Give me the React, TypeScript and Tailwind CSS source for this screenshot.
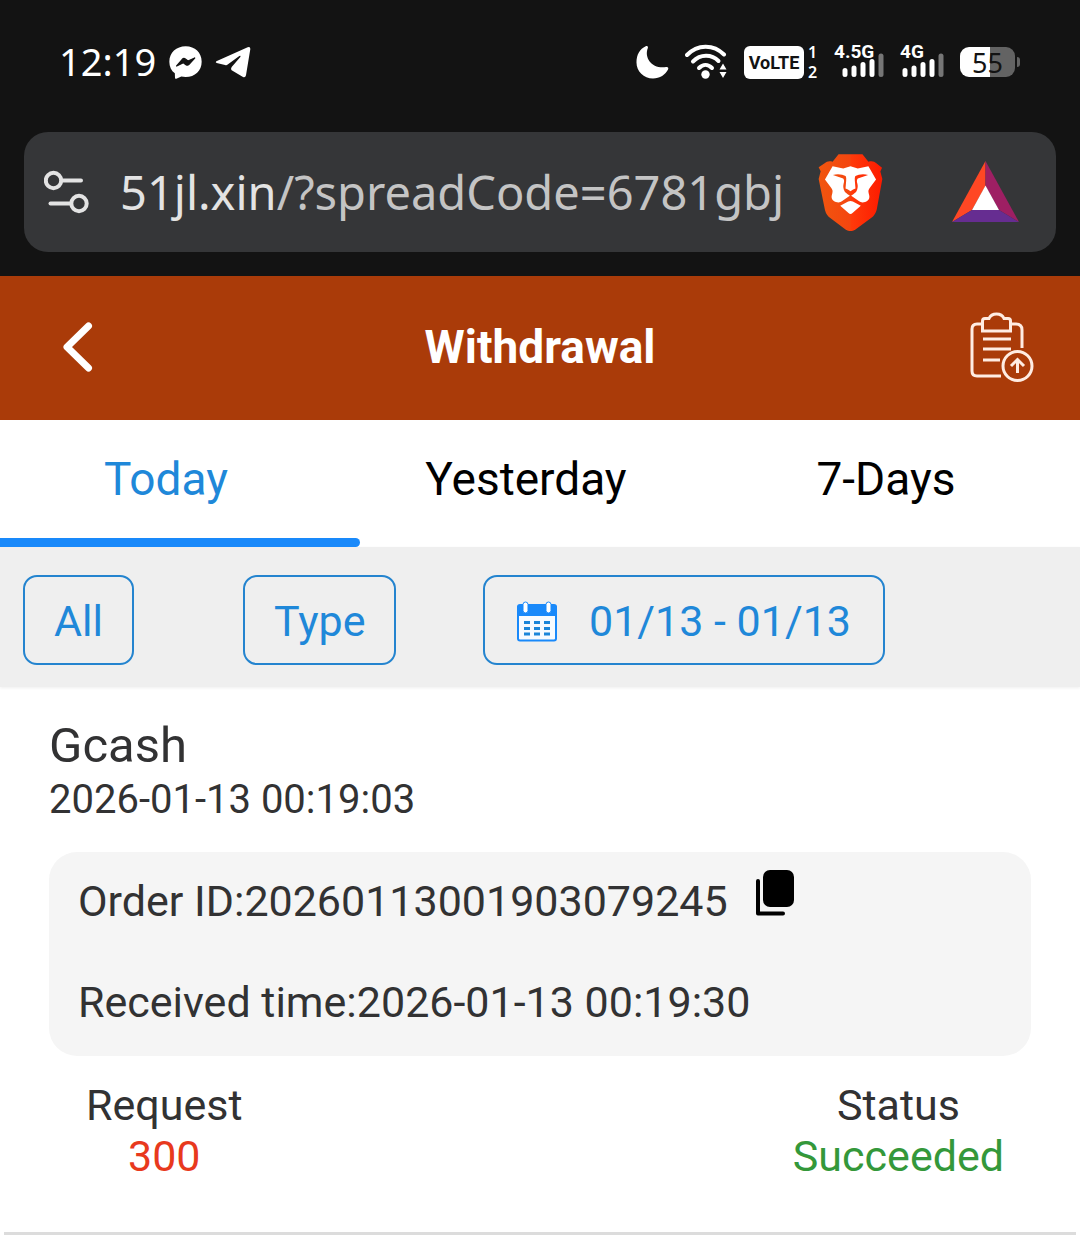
import { useState } from 'react';

interface Withdrawal {
  method: string;
  createdAt: string;
  orderId: string;
  receivedAt: string;
  amount: number;
  status: string;
}

const TABS = ['Today', 'Yesterday', '7-Days'];

const WITHDRAWALS: Withdrawal[] = [
  {
    method: 'Gcash',
    createdAt: '2026-01-13 00:19:03',
    orderId: '20260113001903079245',
    receivedAt: '2026-01-13 00:19:30',
    amount: 300,
    status: 'Succeeded',
  },
];

function MessengerIcon() {
  return (
    <svg width="33" height="33" viewBox="386 44 99 99" aria-hidden="true">
      <path
        fill="#fff"
        d="M436 45c28 0 48 19 48 46s-20 46-48 46c-5 0-9-.5-13-1.500l-15 6.500c-2 1-4-.5-4-3l-.5-13C393 118 387 106 387 91c0-27 21-46 49-46z"
      />
      <path
        d="M409 104l17-20c3-3 6-3 9-1l8 6 20-9-17 19c-3 3-6 3-9 1l-8-6z"
        fill="#131313"
        stroke="#131313"
        strokeWidth="4"
        strokeLinejoin="round"
      />
    </svg>
  );
}

function TelegramIcon() {
  return (
    <svg width="36" height="32" viewBox="18 12 108 96" aria-hidden="true">
      <path fill="#fff" d="M22 58l94-42q8-3 8 5l-13 79q-2 8-9 5L68 85 48 69l-25-6q-5-2-1-5z" />
      <path fill="#131313" d="M46 70q5 1 9-2l36-26q5-2 3 3L68 75q-3 4-1 9l-2 4z" />
    </svg>
  );
}

function MoonIcon() {
  return (
    <svg width="33" height="34" viewBox="0 0 34 34" aria-hidden="true">
      <path
        fill="#fff"
        d="M10 .8C11.500.2 12.800 1 12.200 2.500 8 13 17 24.500 31 22.200c2-.3 2.800.8 2 2.500C30.500 30 24.500 34 17.500 34 8 34 .5 26.700.5 17.500.5 9.500 4 3.500 10 .8z"
      />
    </svg>
  );
}

function WifiIcon() {
  return (
    <svg width="43" height="36" viewBox="0 0 43 36" fill="none" aria-hidden="true">
      <g stroke="#fff" strokeWidth="4" strokeLinecap="round">
        <path d="M2 11C12.500 0 28.500 0 39 10.500" />
        <path d="M8 17.500c7.500-7.500 18.500-7.500 25.500-.5" />
        <path d="M14 24c4-4 9-4 13 0" />
      </g>
      <circle cx="20.500" cy="30.500" r="4.200" fill="#fff" />
      <path d="M34.500 25.500l3.500-6 3.500 6zM34.500 28h7L38 34z" fill="#fff" />
    </svg>
  );
}

function SignalIcon({ label, offset }: { label: string; offset: number }) {
  return (
    <svg
      width={offset + 42}
      height="56"
      viewBox={`0 -10 ${offset + 42} 56`}
      className="overflow-visible"
      role="img"
      aria-label={`${label} signal`}
    >
      <text x="0" y="14" fill="#fff" className="font-['Roboto',sans-serif] text-[19px] font-bold">
        {label}
      </text>
      <g strokeWidth="5" strokeLinecap="round" stroke="#fff">
        <path d={`M${offset + 3} 26.500v4M${offset + 12} 24v6.500M${offset + 21} 20.500v10M${offset + 30} 17.500v13`} />
        <path stroke="#767676" d={`M${offset + 39} 12v18.500`} />
      </g>
    </svg>
  );
}

function SiteSettingsIcon() {
  return (
    <svg width="46" height="44" viewBox="0 0 46 44" fill="none" stroke="#e3e3e3" strokeWidth="4" strokeLinecap="round" aria-hidden="true">
      <circle cx="9.500" cy="10.500" r="7.700" />
      <path d="M18 10.500h19" />
      <circle cx="35" cy="33.500" r="7.700" />
      <path d="M6.500 33.500H26" />
    </svg>
  );
}

function BraveIcon() {
  return (
    <svg width="65" height="77" viewBox="54 70 196 232" aria-hidden="true">
      <defs>
        <linearGradient id="brave" gradientUnits="userSpaceOnUse" x1="54" y1="0" x2="250" y2="0">
          <stop offset="0" stopColor="#f1560f" />
          <stop offset="0.490" stopColor="#f4460f" />
          <stop offset="0.510" stopColor="#ff3a0a" />
          <stop offset="1" stopColor="#fd1a00" />
        </linearGradient>
      </defs>
      <path
        fill="url(#brave)"
        d="M116 71h72l18 22c10-3 18-1 24 5l17 13-5 12 6 22-17 93q-4 16-17 25l-48 35q-14 9-28 0l-46-34q-13-9-17-25L56 145l6-23-6-12 18-12c6-6 14-8 24-5z"
      />
      <path
        fill="#fff"
        d="M152 107l22 7 32-7 23 40-18 24c-5 6-6 11-4 18 5 14 0 22-11 26-8 2-14 1-19-3l-25-18-25 18c-5 4-11 5-19 3-11-4-16-12-11-26 2-7 1-12-4-18l-18-24 23-40 32 7z"
      />
      {/* Brows and nose ridge, with the nose laid over them */}
      <path
        fill="url(#brave)"
        d="M99 133c12-4 28-3 40 4h26c12-7 28-8 40-4l-31 11c-4 5-3 10-1 16 2 8 0 14-2 20-2 6-9 10-15 14l-4 3-4-3c-6-4-13-8-15-14-2-6-4-12-2-20 2-6 3-11-1-16z"
      />
      <path fill="#fff" d="M137 134q15 4 30 0-3 8-2 16l2 24q-7 2-15 8-8-6-15-8l2-24q1-8-2-16z" />
      <path fill="#fff" d="M121 226l24-13q7-3 14 0l24 13-25 22q-6 6-12 0z" />
    </svg>
  );
}

function BatIcon() {
  return (
    <svg width="69" height="62" viewBox="0 0 69 62" aria-hidden="true">
      <path fill="#ff4724" d="M34.500 0v25L21 49 1 61z" />
      <path fill="#9e1f63" d="M34.500 0v25L48 49l20 12z" />
      <path fill="#662d91" d="M1 61l20-12h27l20 12z" />
      <path fill="#fff" d="M34.500 24.500L48 49H21z" />
    </svg>
  );
}

function RecordIcon() {
  return (
    <svg width="64" height="70" viewBox="0 0 64 70" fill="none" stroke="#ffece2" strokeWidth="3" aria-hidden="true">
      <path d="M12 12H7q-5 0-5 5v42q0 5 5 5h24" />
      <path d="M41 12h5q6 0 6 6v18" />
      <path d="M12.500 19V9q0-2.500 2.500-2.500h4Q21 2 26.500 2T34 6.500h4q2.500 0 2.500 2.500v10z" />
      <path d="M13 27h28M13 37h28M13 48h17" />
      <circle cx="47.500" cy="54" r="14.500" />
      <path d="M47.500 61V48M41 54l6.500-6.500L54 54" />
    </svg>
  );
}

function CalendarIcon() {
  return (
    <svg width="40" height="41" viewBox="0 0 40 41" aria-hidden="true">
      <rect x="1" y="5" width="38" height="34.500" rx="2" fill="#f7fbff" stroke="#1989fa" strokeWidth="2" />
      <path d="M0 15V6q0-3 3-3h34q3 0 3 3v9z" fill="#1989fa" />
      <rect x="6" y="1" width="5" height="11" rx="2.500" fill="#fff" stroke="#1989fa" />
      <rect x="29" y="1" width="5" height="11" rx="2.500" fill="#fff" stroke="#1989fa" />
      <path
        d="M7 21.500h6M17 21.500h6M27 21.500h6M7 27.500h6M17 27.500h6M27 27.500h6M7 33h6M17 33h6M27 33h6"
        stroke="#1c86d9"
        strokeWidth="3"
      />
    </svg>
  );
}

function CopyIcon() {
  return (
    <svg width="38" height="46" viewBox="0 0 38 46" aria-hidden="true">
      <rect x="7" y="0" width="31" height="37" rx="7" />
      <path d="M2 11v32.500h25" fill="none" stroke="#000" strokeWidth="4" strokeLinecap="round" strokeLinejoin="round" />
    </svg>
  );
}

function StatusBar() {
  return (
    <div className="flex h-[124px] items-center justify-between pr-[60px] pl-[59px] text-white">
      <div className="flex items-center gap-[13px]">
        <span className="pb-[2px] font-['Noto_Sans',sans-serif] text-[38px] leading-none">12:19</span>
        <MessengerIcon />
        <TelegramIcon />
      </div>
      <div className="flex items-center gap-4">
        <MoonIcon />
        <WifiIcon />
        <div className="flex items-center gap-1">
          <span className="flex h-[33px] w-[60px] items-center justify-center rounded-md bg-white font-['Roboto',sans-serif] text-[18px] font-bold text-[#131313]">
            VoLTE
          </span>
          <span className="flex w-[10px] flex-col font-['Noto_Sans',sans-serif] text-[16px] leading-5 font-semibold">
            <span>1</span>
            <span>2</span>
          </span>
        </div>
        <SignalIcon label="4.5G" offset={8} />
        <SignalIcon label="4G" offset={2} />
        <div className="flex items-center gap-[2px]">
          <span className="flex h-[30px] w-[55px] items-center justify-center rounded-[9px] bg-linear-to-r from-white from-55% to-[#636363] to-55% font-['Noto_Sans',sans-serif] text-[27px] leading-none text-[#131313]">
            55
          </span>
          <span className="h-[10px] w-[3px] rounded-r-sm bg-[#636363]" />
        </div>
      </div>
    </div>
  );
}

function AddressBar() {
  return (
    <div className="mx-6 mt-2 flex h-[120px] items-center rounded-[24px] bg-[#353638] pr-9 pl-5">
      <button type="button" aria-label="Site settings">
        <SiteSettingsIcon />
      </button>
      <button
        type="button"
        className="ml-[30px] min-w-0 flex-1 overflow-hidden text-left font-['Noto_Sans',sans-serif] text-[47px] whitespace-nowrap text-[#c4c4c4]"
      >
        <span className="text-[#e3e3e3]">51jl.xin</span>/?spreadCode=6781gbj
      </button>
      <button type="button" aria-label="Brave Shields" className="ml-7">
        <BraveIcon />
      </button>
      <button type="button" aria-label="Brave Rewards" className="ml-[68px]">
        <BatIcon />
      </button>
    </div>
  );
}

function FilterButton({ children }: { children: React.ReactNode }) {
  return (
    <button
      type="button"
      className="flex h-[90px] items-center rounded-[14px] border-2 border-[#2484cf] px-[29px] pt-[2px] text-[43px] whitespace-nowrap text-[#1f88d9]"
    >
      {children}
    </button>
  );
}

function WithdrawalItem({ item }: { item: Withdrawal }) {
  return (
    <article>
      <div className="px-[49px] pt-7">
        <h2 className="text-[49px] leading-[61px]">{item.method}</h2>
        <p className="text-[40px] leading-[48px]">{item.createdAt}</p>
        <div className="mt-7 rounded-[28px] bg-[#f5f5f5] px-[29px] pt-[18px] pb-[26px] text-[43px]">
          <div className="flex items-start gap-7">
            <span className="leading-[62px]">Order ID:{item.orderId}</span>
            <button type="button" aria-label="Copy order ID">
              <CopyIcon />
            </button>
          </div>
          <p className="mt-[42px] leading-[56px]">Received time:{item.receivedAt}</p>
        </div>
      </div>
      <dl className="flex justify-between pt-6 pr-[76px] pb-[50px] pl-[86px] text-center text-[43px] leading-[51px]">
        <div>
          <dt>Request</dt>
          <dd className="text-[#e8391d]">{item.amount}</dd>
        </div>
        <div>
          <dt>Status</dt>
          <dd className="text-[#34983a]">{item.status}</dd>
        </div>
      </dl>
      <hr className="mx-1 border-t-[3px] border-[#dcdcdc]" />
    </article>
  );
}

export default function App() {
  const [activeTab, setActiveTab] = useState('Today');

  return (
    <div className="min-h-screen bg-white font-['Roboto',sans-serif] text-[#323233]">
      {/* Phone status bar and browser toolbar */}
      <div className="bg-[#131313] pb-6">
        <StatusBar />
        <AddressBar />
      </div>

      <header className="grid h-36 grid-cols-[1fr_auto_1fr] items-center bg-[#aa3b09] pr-[46px] pb-[2px] pl-[62px] text-white">
        <button type="button" aria-label="Back" className="justify-self-start">
          <svg width="31" height="52" viewBox="0 0 31 52" fill="none" stroke="#fff" strokeWidth="7" strokeLinecap="round" strokeLinejoin="round">
            <path d="M26.500 5L5 26l21.500 21" />
          </svg>
        </button>
        <h1 className="-ml-4 text-[46px] font-bold">Withdrawal</h1>
        <button type="button" aria-label="Withdrawal records" className="justify-self-end">
          <RecordIcon />
        </button>
      </header>

      <nav className="grid grid-cols-3 text-[46px]">
        {TABS.map((tab) => (
          <button
            key={tab}
            type="button"
            onClick={() => setActiveTab(tab)}
            className={`flex flex-col ${tab === activeTab ? 'text-[#1f88d9]' : 'text-black'}`}
          >
            <span className="w-full pr-7 text-center leading-[118px]">{tab}</span>
            <span className={`h-[9px] w-full rounded-r-full ${tab === activeTab ? 'bg-[#1989fa]' : ''}`} />
          </button>
        ))}
      </nav>

      <div className="grid grid-cols-[220px_240px_1fr] justify-items-start bg-[#efefef] pt-7 pb-[22px] pl-[23px] shadow-[0_1px_3px_#efefef]">
        <FilterButton>All</FilterButton>
        <FilterButton>Type</FilterButton>
        <FilterButton>
          <span className="flex items-center gap-8 px-[3px]">
            <CalendarIcon />
            01/13 - 01/13
          </span>
        </FilterButton>
      </div>

      <main>
        {WITHDRAWALS.map((item) => (
          <WithdrawalItem key={item.orderId} item={item} />
        ))}
      </main>
    </div>
  );
}
